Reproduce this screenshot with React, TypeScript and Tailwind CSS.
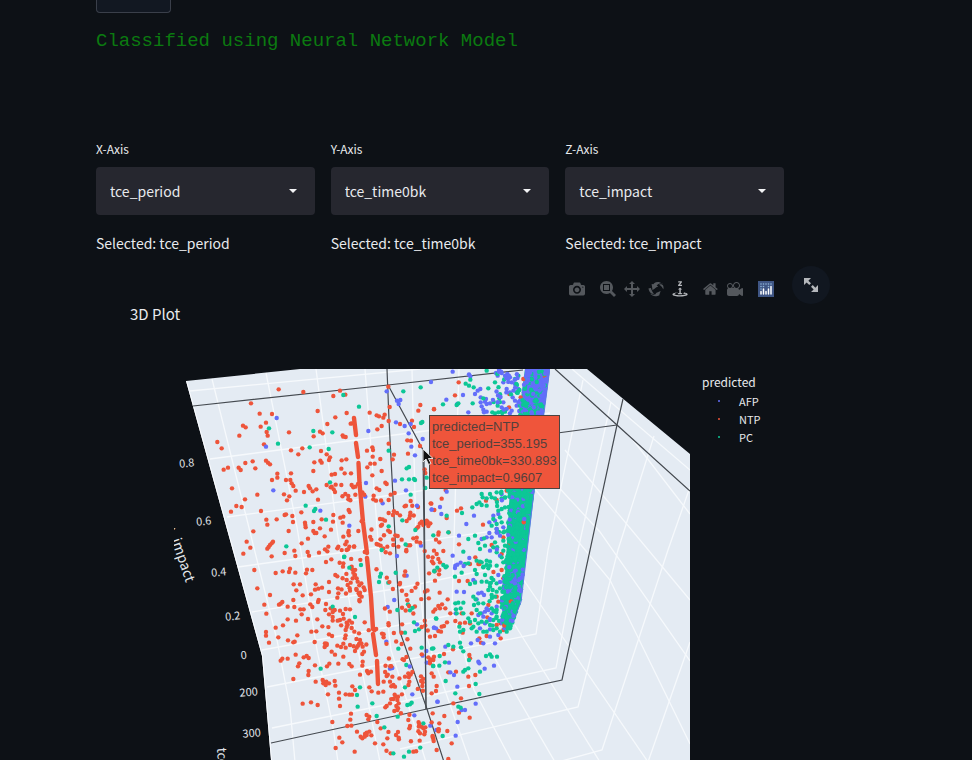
import { useMemo, useState } from "react";

const UI = "font-['Noto_Sans_CJK_SC','Noto_Sans',sans-serif]";
const COLORS = { r: "#ee543a", g: "#0cc796", b: "#636efa" } as const;
type Kind = keyof typeof COLORS;
type Point = { x: number; y: number; k: Kind };

/* Sample positions, stored in thirds of a scene unit, "x,y" separated by spaces. */
const UPPER: Record<Kind, string> = {
  r: "356,118 430,126 520,138 540,122 556,134 273,160 299,191 336,192 318,218 302,230 249,227 257,232 238,257 320,246 323,257 312,283 387,247 473,183 502,222 526,202 560,189 629,188 650,196 657,199 674,194 670,203 665,228 652,238 689,171 686,213 685,110 172,276 185,295 461,259 480,245 488,250 548,256 557,261 550,260 576,220 572,221 393,301 415,313 427,295 483,303 500,313 510,322 507,330 463,337 481,332 485,338 460,363 545,331 559,328 544,356 554,370 573,370 515,374 525,372 621,302 637,292 639,300 638,320 631,341 644,341 622,352 661,327 637,376 665,363 686,281 702,314 698,328 191,359 204,353 236,353 242,360 256,339 278,334 286,355 318,332 324,338 330,343 352,371 352,383 336,390 393,370 391,390 378,390 395,400 400,408 407,422 432,426 446,408 450,415 458,424 469,418 216,415 292,434 255,448 229,468 245,471 213,485 303,483 319,509 322,524 350,508 374,495 378,493 397,498 399,516 424,487 474,449 372,433 388,439 381,451 280,544 260,575 250,611 271,593 322,596 326,591 330,585 335,580 339,575 335,619 386,543 374,609 403,602 406,618 425,580 444,566 443,606 447,617 435,518 437,532 436,525 460,516 460,543 464,549 469,549 494,559 485,508 480,535 513,539 520,495 519,515 541,503 550,500 548,518 566,480 569,486 500,405 512,412 521,418 525,426 527,404 515,410 544,405 575,405 586,410 580,412 556,432 565,438 565,448 594,402 650,415 658,420 676,398 680,402 641,437 648,452 640,448 686,450 692,434 704,429 686,489 668,508 675,512 660,507 711,489 734,469 774,471 744,311 742,271 753,272 775,182 781,165 822,178 756,212 720,222 762,231 780,288 752,453 751,488 720,496 740,513 750,497 748,505 794,358 796,369 812,460 823,480 477,608 502,604 495,598 505,590 550,560 565,548 567,556 595,543 634,569 655,584 682,590 690,546 706,556 715,590 725,569 744,586 760,565 770,575 690,610 739,600 532,595 535,590 560,575 556,583 568,590 582,590 564,598 560,600 650,582 662,587 670,595 700,585 780,520 785,515 790,525 796,520 803,516 806,523 811,520 805,528 775,530 800,512 770,535",
  b: "350,204 318,290 340,421 481,482 568,527 625,243 680,124 711,152 721,150 716,162 813,96 788,267 746,250 734,228 708,217 752,222 765,316 754,290 705,392 668,460 738,421 618,399 616,440 815,478 783,587",
  g: "550,135 730,124 782,112 597,170 327,235 460,243 517,247 354,281 449,292 506,297 510,397 437,467 466,477 462,483 498,509 379,589 552,621 686,302 740,355 747,351 726,388 747,388 765,390 787,216 783,219 762,387 800,383 796,414 752,434 727,511 766,540 686,529 820,556 665,600",
};
const LOWER: Record<Kind, string> = {
  r: "283,60 347,69 368,64 390,56 387,66 406,68 441,59 457,60 438,70 292,115 330,135 313,164 319,191 357,164 367,156 362,161 400,150 401,103 420,103 409,121 428,136 467,103 465,119 475,116 486,113 453,133 476,150 474,156 507,96 507,126 534,115 535,130 532,143 498,36 514,28 526,75 532,79 383,170 403,171 421,178 431,178 425,193 451,163 457,171 383,208 408,212 444,207 472,208 369,226 347,233 355,262 318,246 318,257 327,278 384,271 400,277 404,275 412,256 454,245 469,244 487,229 507,193 518,201 512,175 524,180 540,182 549,192 557,177 570,178 533,212 540,210 507,253 464,276 498,162 496,180 367,326 362,332 383,326 407,314 418,340 414,349 431,322 440,318 446,324 465,346 446,363 445,375 400,387 508,341 501,349 515,305 525,314 550,320 535,341 568,342 575,349 488,390 490,400 493,396 497,405 499,395 507,400 524,393 526,407 467,395 504,433 537,428 537,446 540,468 557,433 568,434 576,434 428,461 453,457 473,465 573,491 571,509 517,516 562,528 574,527 538,563 547,577 527,594 584,605 591,545 495,280 500,285 494,291 500,281 532,287 543,291 550,281 557,293 570,285 560,218 568,212 563,224 560,231 576,218 557,240 557,256 575,234 583,245 597,250 555,265 600,270 604,280 608,290 590,293 585,303 594,287 597,282 612,305 607,312 608,335 607,347 600,374 621,363 625,370 633,365 577,409 585,420 628,412 635,424 655,428 670,425 652,516 645,580 662,535 670,583 680,468 690,460 700,447 707,440 712,450 716,460 709,468 712,480 703,483 676,472 704,434 714,440 620,495 628,500 625,508 620,548 628,545 634,556 615,552 607,565 602,560 620,555 614,560 671,395 680,378 697,380 690,395 700,405 705,410 735,380 732,330 745,370 757,366 748,395 783,379 788,397 787,408 745,510 748,535 750,528 779,572 760,605 790,535 795,545 780,550 785,530 796,532 708,555 714,546 682,565 692,610 550,40 549,50 575,50 577,58 580,68 585,75 590,85 593,95 598,106 604,100 611,112 614,120 600,128 605,140 598,150 563,105 572,98 578,85 590,120 596,130 570,122 560,90",
  b: "740,77 711,18 683,171 771,223 822,233 679,275 690,356 697,354 788,317 799,303 800,338 757,433 832,455 763,496 811,527 829,540",
  g: "482,356 518,170 585,201 553,20 568,53 603,45 663,71 657,96 685,98 660,80 712,180 744,163 750,181 762,217 735,248 765,243 777,238 715,296 785,293 816,296 600,412 591,435 593,470 637,460 650,498 735,412 742,465 750,463 755,458 713,500 673,532 790,520 700,610 732,620 747,605 820,348 823,62 829,206",
};
const UPPER_RIGHT: Record<Kind, string> = {
  r: "386,40 375,79 312,120 538,75 537,115 580,30 572,85 347,363 335,389 304,404 393,418 381,425 350,447 356,490 326,490 318,512 328,520 340,546 312,545 320,555 325,570 330,580 310,583 387,526 436,565 445,585 459,467 485,528 520,505 468,395 500,393 530,365 515,555 535,530 308,565 325,497",
  b: "368,8 417,16 421,22 382,105 349,92 399,78 415,130 435,75 443,65 451,60 452,85 468,90 452,100 465,98 470,105 455,112 480,103 460,122 470,128 462,130 498,12 503,20 515,12 525,20 532,15 540,25 520,40 545,40 530,60 540,70 548,85 555,95 520,100 515,115 530,120 545,125 560,110 565,60 555,45 570,95 350,368 330,414 305,422 334,435 432,440 409,465 387,500 368,560 418,567 376,590 478,460 490,440 500,490 478,492 485,505 470,505 455,510 510,500 520,475 495,455 510,560 480,545 505,435 515,375",
  g: "407,44 421,32 417,50 431,55 380,108 385,103 339,106 428,103 460,88 470,5 495,40 475,58 502,15 508,88 503,110 487,130 495,133 505,130 515,128 525,128 560,70 555,30 570,110 565,20 350,440 396,432 427,415 440,405 448,400 458,385 455,375 470,388 480,375 485,385 495,388 500,370 513,372 515,388 525,385 455,408 470,410 350,592 355,490 400,548 415,510 435,500 462,508 445,522 450,540 465,530 405,585 440,575 455,580 470,575 490,535 495,520 500,480 485,470 500,465 490,450 510,445 515,460 520,490 520,515 525,530 520,545 500,550 515,565 520,580 500,590 480,590 460,595 515,420 525,415 505,425",
};
const LOWER_RIGHT: Record<Kind, string> = {
  r: "306,4 314,34 328,30 327,43 315,62 329,98 353,118 336,133 325,138 316,148 310,155 330,145 346,145 361,160 351,187 335,200 342,198 325,213 333,215 315,228 300,230 295,292 303,298 310,300 300,303 312,290 300,310 342,282 369,268 355,337 378,335 415,350 417,378 436,345 305,340 311,350 320,378 318,393 305,400 393,415 370,430 387,458 419,473 343,468 305,487 325,508 328,490 310,536 352,513 365,550 320,570 355,597 308,460 420,12 413,63 387,63 448,12 376,183 395,160 405,188 398,218 390,190 420,190 425,160 418,285 420,295 448,235 453,248 470,228 472,172 500,110 505,125 515,30 520,55 512,190 520,210 512,235 500,195 475,135",
  b: "382,14 392,8 375,24 401,18 430,60 380,95 402,96 445,100 455,98 462,105 440,118 377,160 312,203 318,205 346,260 357,308 361,337 372,345 382,380 323,425 395,450 383,486 377,527 405,450 437,431 464,326 492,317 445,305 448,310 423,250 443,240 460,250 480,230 495,250 480,208 450,205 445,165 455,160 465,155 470,145 460,170 475,150 485,160 480,180 465,190 500,140 505,225 435,65",
  g: "313,34 318,175 340,15 347,22 375,50 395,38 322,23 415,10 450,5 435,30 460,20 470,15 475,25 480,5 465,45 420,72 435,68 455,65 440,42 470,65 480,70 490,60 500,70 488,90 500,95 475,90 480,80 495,110 485,105 510,85 430,110 437,118 432,135 445,130 440,150 450,160 460,130 400,128 376,130 385,128 378,148 392,145 400,160 380,160 415,175 420,185 435,180 430,200 440,215 460,215 470,185 480,195 490,180 500,170 490,210 500,205 510,215 470,215 455,185 445,190 388,200 390,215 400,210 425,205 390,248 393,262 400,274 355,255 370,260 329,288 345,307 347,363 310,265 309,318 328,317 400,335 405,330 417,300 415,325 450,335 437,372 448,402 468,288 480,283 485,290 501,290 376,400 385,440 392,443 338,528 525,205 530,215 540,205 485,145 500,150",
};

function parse(groups: Record<Kind, string>, left: number, top: number): Point[] {
  return (Object.keys(groups) as Kind[]).flatMap((k) =>
    groups[k].split(" ").map((pair) => {
      const [x, y] = pair.split(",").map(Number);
      return { x: left + x / 3, y: top + y / 3, k };
    })
  );
}

function generator(seed: number) {
  let s = seed;
  return () => {
    s = (s + 0x6d2b79f5) | 0;
    let t = Math.imul(s ^ (s >>> 15), 1 | s);
    t = (t + Math.imul(t ^ (t >>> 7), 61 | t)) ^ t;
    return ((t ^ (t >>> 14)) >>> 0) / 4294967296;
  };
}

/* x range, y range, and how many samples of each class fall in the cell */
const CELLS: [number, number, number, number, number, number, number][] = [
  [492, 522, 370, 415, 0, 12, 22],
  [492, 510, 487, 560, 0, 12, 5],
  [488, 505, 570, 628, 2, 14, 5],
  [380, 432, 500, 560, 20, 1, 1],
  [382, 430, 560, 640, 38, 2, 1],
  [385, 425, 640, 700, 24, 1, 1],
  [325, 378, 560, 650, 26, 0, 0],
  [335, 372, 490, 560, 14, 0, 0],
  [375, 425, 705, 758, 14, 1, 0],
  [425, 442, 720, 745, 5, 0, 0],
];

/* The crowded wall: [y, left edge, right edge] */
const WALL = [
  [369, 525, 550],
  [413, 519, 544],
  [487, 509, 535],
  [560, 505, 526],
  [600, 501, 522],
  [615, 500, 518],
  [630, 503, 511],
];
function wallAt(y: number) {
  let i = 0;
  while (i < WALL.length - 2 && WALL[i + 1][0] < y) i++;
  const [a, b] = [WALL[i], WALL[i + 1]];
  const t = (y - a[0]) / (b[0] - a[0]);
  return [a[1] + (b[1] - a[1]) * t, a[2] + (b[2] - a[2]) * t];
}

function buildPoints(): Point[] {
  const rand = generator(41);
  const pts = [
    ...parse(UPPER, 160, 350),
    ...parse(LOWER, 160, 550),
    ...parse(UPPER_RIGHT, 330, 369),
    ...parse(LOWER_RIGHT, 330, 560),
  ];
  for (const [x0, x1, y0, y1, r, g, b] of CELLS) {
    ([["r", r], ["g", g], ["b", b]] as [Kind, number][]).forEach(([k, n]) => {
      for (let i = 0; i < n; i++) {
        pts.push({ x: x0 + rand() * (x1 - x0), y: y0 + rand() * (y1 - y0), k });
      }
    });
  }
  for (let i = 0; i < 1100; i++) {
    const y = 371 + rand() * 258;
    const [l, r] = wallAt(y);
    const u = rand();
    const blue = y < 400 ? 0.68 : y < 425 ? 0.5 : y < 500 ? 0.2 : y < 570 ? 0.1 : 0.24;
    const v = rand();
    const k: Kind = v > 0.988 ? "r" : v < blue ? "b" : "g";
    pts.push({ x: l + 1 + u * (r - l - 3), y, k });
  }
  return pts;
}

const STREAK = "M354 418 L356 435 M356 443 L358 457 M358.500 463 L359.500 483 L363 522 L367 553 M367 558 L371 597 L373 629 M373 634 L376 655 M377 661 L378 684";

const GRID = [
  "M212 379 L257 560 L277 640 L290 707 L295 762",
  "M266 373 L297 527 L317 650 L333 727 L338 762",
  "M316 369 L338 537 L358 650 L380 762",
  "M365 369 L378 540 L391 650 L426 762",
  "M412 369 L416 540 L424 630 L470 762",
  "M459 369 L454 540 L452 608 L474 690 L512 762",
  "M190 391 L420 369",
  "M210 459 L433 430 L550 413",
  "M227 517 L400 494 L535 473",
  "M238 567 L360 550 L528 526",
  "M252 612 L400 588 L500 567",
  "M262 650 L400 625 L458 614",
  "M267 687 L400 661 L536 634 L548 550 L583 380",
  "M272 728 L400 702 L556 668 L578 550 L611 402",
  "M400 749 L578 707 L618 550 L654 436",
  "M558 762 L602 750 L668 550 L690 487",
  "M648 762 L690 642",
  "M572 369 L690 470",
  "M510 560 L648 762",
  "M534 488 L610 580 L690 744",
  "M565 450 L690 600",
  "M540 467 L600 532 L690 661",
  "M630 436 L690 514",
  "M490 650 L555 762",
  "M515 625 L600 762",
];

const AXES = [
  "M193 406 L388 385 L523 370",
  "M387 369 L389 420 L400 632 L427 709 L444 762",
  "M388 385 L423 450 L426 709",
  "M271 743 L427 709 L562 680 L617 425 L623 399",
  "M555 369 L617 425 L690 491",
  "M617 425 L550 434",
];

const TICKS: [string, number, number][] = [
  ["0.8", 187, 467],
  ["0.6", 204, 525],
  ["0.4", 219, 576],
  ["0.2", 233, 620],
  ["0", 244, 659],
  ["200", 249, 696],
  ["300", 252, 737],
];

function Scene() {
  const points = useMemo(buildPoints, []);
  return (
    <svg viewBox="168 369 522 391" className="block h-[391px] w-[522px] shrink-0" role="img" aria-label="3D scatter plot">
      <defs>
        <clipPath id="walls">
          <path d="M186 381 L300 369 H587 L690 454 V760 H271 L262 656 Z" />
        </clipPath>
        <clipPath id="zTitle">
          <path d="M174 528 H200 V600 H174 Z" />
        </clipPath>
      </defs>
      <g clipPath="url(#walls)">
        <rect x="168" y="369" width="522" height="391" fill="#e4ebf3" />
        <g fill="none" stroke="#f6f9fc" strokeWidth="1.3">
          {GRID.map((d) => <path key={d} d={d} />)}
        </g>
        <path d="M186 381 L262 656 L271 760" fill="none" stroke="#fafcff" strokeWidth="2" />
        <path d="M525 369 H550 L544 413 L535 487 L526 560 L521 600 L516 617 L507 626 L502 615 L506 560 L510 487 L519 413 Z" fill="#0cc796" />
        <path d="M525 369 H550 L545 405 L522 400 Z" fill="#636efa" />
        <g fill="none" stroke="#454a50" strokeWidth="1.2">
          {AXES.map((d) => <path key={d} d={d} />)}
        </g>
        {points.map((p, i) => (
          <circle key={i} cx={p.x} cy={p.y} r="2.2" fill={COLORS[p.k]} />
        ))}
        <path d="M549.500 371 L544 413 L534.500 487 L526 560 L521 602 L515 617" fill="none" stroke="#5f78e8" strokeWidth="1" />
        <path d={STREAK} fill="none" stroke={COLORS.r} strokeWidth="4.400" strokeLinecap="round" />
        <path d="M424 450 L426 709" fill="none" stroke="#454a50" strokeWidth="1" />
      </g>
      <g className={UI} fill="#e2e5ea" fontSize="11" textAnchor="middle">
        {TICKS.map(([t, x, y]) => (
          <text key={t} x={x} y={y} transform={`rotate(-5 ${x} ${y})`}>{t}</text>
        ))}
        <g clipPath="url(#zTitle)">
          <text x="186" y="583" fontSize="14" textAnchor="end" transform="rotate(71 186 583)">tce_impact</text>
        </g>
        <text x="217" y="748" fontSize="13" textAnchor="start" transform="rotate(86 217 748)">tce_time0bk</text>
      </g>
    </svg>
  );
}

const ICONS = {
  camera: "m500 450c-83 0-150-67-150-150 0-83 67-150 150-150 83 0 150 67 150 150 0 83-67 150-150 150z m400 150h-120c-16 0-34 13-39 29l-31 93c-6 15-23 28-40 28h-340c-16 0-34-13-39-28l-31-94c-6-15-23-28-40-28h-120c-55 0-100-45-100-100v-450c0-55 45-100 100-100h800c55 0 100 45 100 100v450c0 55-45 100-100 100z m-400-550c-138 0-250 112-250 250 0 138 112 250 250 250 138 0 250-112 250-250 0-138-112-250-250-250z m365 380c-19 0-35 16-35 35 0 19 16 35 35 35 19 0 35-16 35-35 0-19-16-35-35-35z",
  zoom: "m1000-25l-250 251c40 63 63 138 63 218 0 224-182 406-407 406-224 0-406-182-406-406s183-406 407-406c80 0 155 22 218 62l250-250 125 125z m-812 250l0 438 437 0 0-438-437 0z m62 375l313 0 0-312-313 0 0 312z",
  pan: "m1000 350l-187 188 0-125-250 0 0 250 125 0-188 187-187-187 125 0 0-250-250 0 0 125-188-188 186-187 0 125 252 0 0-250-125 0 187-188 188 188-125 0 0 250 250 0 0-126 187 188z",
  rotate: "m922 660c-5 4-9 7-14 11-359 263-580-31-580-31l-102 28 58-400c0 1 1 1 2 2 118 108 351 249 351 249s-62 27-100 42c88 83 222 183 347 122 16-8 30-17 44-27-2 1-4 2-6 4z m36-329c0 0 64 229-88 296-62 27-124 14-175-11 157-78 225-208 249-266 8-19 11-31 11-31 2 5 6 15 11 32-5-13-8-20-8-20z m-775-239c70-31 117-50 198-32-121 80-199 346-199 346l-96-15-58-12c0 0 55-226 155-287z m603 133l-317-139c0 0 4-4 19-14 7-5 24-15 24-15s-177-147-389 4c235-287 536-112 536-112l31-22 100 299-4-1z m-298-153c6-4 14-9 24-15 0 0-17 10-24 15z",
  turntable: "m833 5l-17 108v41l-130-65 130-66c0 0 0 38 0 39 0-1 36-14 39-25 4-15-6-22-16-30-15-12-39-16-56-20-90-22-187-23-279-23-261 0-341 34-353 59 3 60 228 110 228 110-140-8-351-35-351-116 0-120 293-142 474-142 155 0 477 22 477 142 0 50-74 79-163 96z m-374 94c-58-5-99-21-99-40 0-24 65-43 144-43 79 0 143 19 143 43 0 19-42 34-98 40v216h87l-132 135-133-135h88v-216z m167 515h-136v1c16 16 31 34 46 52l84 109v54h-230v-71h124v-1c-16-17-28-32-44-51l-89-114v-51h245v72z",
  home: "m786 296v-267q0-15-11-26t-25-10h-214v214h-143v-214h-214q-15 0-25 10t-11 26v267q0 1 0 2t0 2l321 264 321-264q1-1 1-4z m124 39l-34-41q-5-5-12-6h-2q-7 0-12 3l-386 322-386-322q-7-4-13-4-7 2-12 7l-35 41q-4 5-3 13t6 12l401 334q18 15 42 15t43-15l136-114v109q0 8 5 13t13 5h107q8 0 13-5t5-13v-227l122-102q5-5 6-12t-4-13z",
  movie: "m938 413l-188-125c0 37-17 71-44 94 64 38 107 107 107 187 0 121-98 219-219 219-121 0-219-98-219-219 0-61 25-117 66-156h-115c30 33 49 76 49 125 0 103-84 187-187 187s-188-84-188-187c0-57 26-107 65-141-38-22-65-62-65-109v-250c0-70 56-126 125-126h500c69 0 125 56 125 126l188-126c34 0 62 28 62 63v375c0 35-28 63-62 63z m-750 0c-69 0-125 56-125 125s56 125 125 125 125-56 125-125-56-125-125-125z m406-1c-87 0-157 70-157 157 0 86 70 156 157 156s156-70 156-156-70-157-156-157z",
};

function Tool({ name, label, active }: { name: keyof typeof ICONS; label: string; active?: boolean }) {
  return (
    <button type="button" aria-label={label} className={active ? "text-[#b4b7bb]" : "text-[#54585d]"}>
      <svg viewBox="0 0 1000 1000" className="block size-4" fill="currentColor">
        <path transform="matrix(1 0 0 -1 0 850)" d={ICONS[name]} />
      </svg>
    </button>
  );
}

function PlotlyLogo() {
  return (
    <svg viewBox="0 0 16 16" className="block size-4">
      <rect width="16" height="16" fill="#3f5685" />
      <g fill="#8fb4d8">
        {[3, 5.5, 8, 10.5, 13].map((x) => <circle key={x} cx={x} cy="3" r="0.8" />)}
        {[3, 5.5, 10.5].map((x) => <circle key={x} cx={x} cy="5.500" r="0.8" />)}
        <circle cx="3" cy="8" r="0.8" />
      </g>
      <g stroke="#fff" strokeWidth="1.5" strokeLinecap="round">
        <path d="M3 10.500V13 M5.500 8V13 M8 10.500V13 M10.500 8V13 M13 5.500V13" />
      </g>
    </svg>
  );
}

const FIELDS = ["tce_period", "tce_time0bk", "tce_impact"];

function AxisSelect({ axis, initial }: { axis: string; initial: string }) {
  const [value, setValue] = useState(initial);
  const id = `axis-${axis}`;
  return (
    <div className="text-[#e8eaed]">
      <label htmlFor={id} className="block text-xs leading-5">{axis}-Axis</label>
      <div className="relative mt-2">
        <select
          id={id}
          value={value}
          onChange={(e) => setValue(e.target.value)}
          className="block h-12 w-full appearance-none rounded bg-[#26272f] px-3.5 text-sm text-[#e8eaed]"
        >
          {FIELDS.map((f) => <option key={f}>{f}</option>)}
        </select>
        <svg viewBox="0 0 8 4" className="pointer-events-none absolute right-4.5 top-[22px] h-1 w-2" fill="#f3f4f6">
          <path d="M0 0H8L4 4Z" />
        </svg>
      </div>
      <p className="mt-4 text-sm leading-6">Selected: {value}</p>
    </div>
  );
}

const LEGEND: [string, string][] = [
  ["AFP", "bg-[#636efa]"],
  ["NTP", "bg-[#ee543a]"],
  ["PC", "bg-[#0cc796]"],
];

export default function App() {
  return (
    <main className={`h-screen overflow-hidden bg-[#0d1116] pl-24 text-[#e8eaed] ${UI}`}>
      <button type="button" aria-label="Classify" className="block h-[13px] w-[75px] rounded-b border border-t-0 border-[#3a3f4a] bg-[#121822]" />
      <h1 className="mt-4 whitespace-nowrap font-['Courier_New','Liberation_Mono',monospace] text-[19px] leading-6 text-[#0b7a10]">
        Classified using Neural Network Model
      </h1>

      <section className="mt-[86px] grid max-w-[688px] grid-cols-3 gap-4">
        <AxisSelect axis="X" initial="tce_period" />
        <AxisSelect axis="Y" initial="tce_time0bk" />
        <AxisSelect axis="Z" initial="tce_impact" />
      </section>

      <section className="mt-[11px]">
        <div className="flex h-[38px] max-w-[734px] items-center justify-end">
          <div className="mt-2 flex items-center gap-[15px]">
            <Tool name="camera" label="Download plot" />
            <div className="flex gap-2">
              <Tool name="zoom" label="Zoom" />
              <Tool name="pan" label="Pan" />
              <Tool name="rotate" label="Orbital rotation" />
              <Tool name="turntable" label="Turntable rotation" active />
            </div>
            <div className="flex gap-2">
              <Tool name="home" label="Reset camera" />
              <Tool name="movie" label="Reset to last save" />
            </div>
            <a href="#plotly" aria-label="Plotly"><PlotlyLogo /></a>
          </div>
          <button type="button" aria-label="Fullscreen" className="ml-4.5 grid size-[38px] place-items-center rounded-full bg-[#111720]">
            <svg viewBox="0 0 8 8" className="size-3.5" fill="#b4b7bb">
              <path d="M0 0v4l1.500-1.500L3 4l1-1-1.500-1.500L4 0H0zm5 4L4 5l1.500 1.500L4 8h4V4L6.500 5.500 5 4z" />
            </svg>
          </button>
        </div>
        <h2 className="pl-[34px] text-[15px] leading-5">3D Plot</h2>

        <div className="mt-[45px] flex pl-[72px]">
          <div className="relative">
            <Scene />
            <div className="absolute left-[261px] top-[46px] w-[131px] whitespace-nowrap border border-[#4a4442] bg-[#ef553b] px-0.5 py-0.5 font-['Liberation_Sans',Arial,sans-serif] text-[13px] leading-[17px] text-[#54403c]">
              <p>predicted=NTP</p>
              <p>tce_period=355.195</p>
              <p>tce_time0bk=330.893</p>
              <p>tce_impact=0.9607</p>
            </div>
            <svg viewBox="0 0 12 18" className="absolute left-[254px] top-[79px] h-[18px] w-3">
              <path d="M1 1V14L4 11L6.500 16.500L9 15.500L6.500 10.500H11Z" fill="#111" stroke="#eee" strokeWidth="0.9" />
            </svg>
          </div>
          <div className="pl-3">
            <p className="mt-0.5 text-xs leading-[21px]">predicted</p>
            <ul className="text-[11px] leading-[18px]">
              {LEGEND.map(([name, dot]) => (
                <li key={name} className="flex items-center pl-4">
                  <span className={`size-0.5 rounded-full ${dot}`} />
                  <span className="pl-[19px]">{name}</span>
                </li>
              ))}
            </ul>
          </div>
        </div>
      </section>
    </main>
  );
}
